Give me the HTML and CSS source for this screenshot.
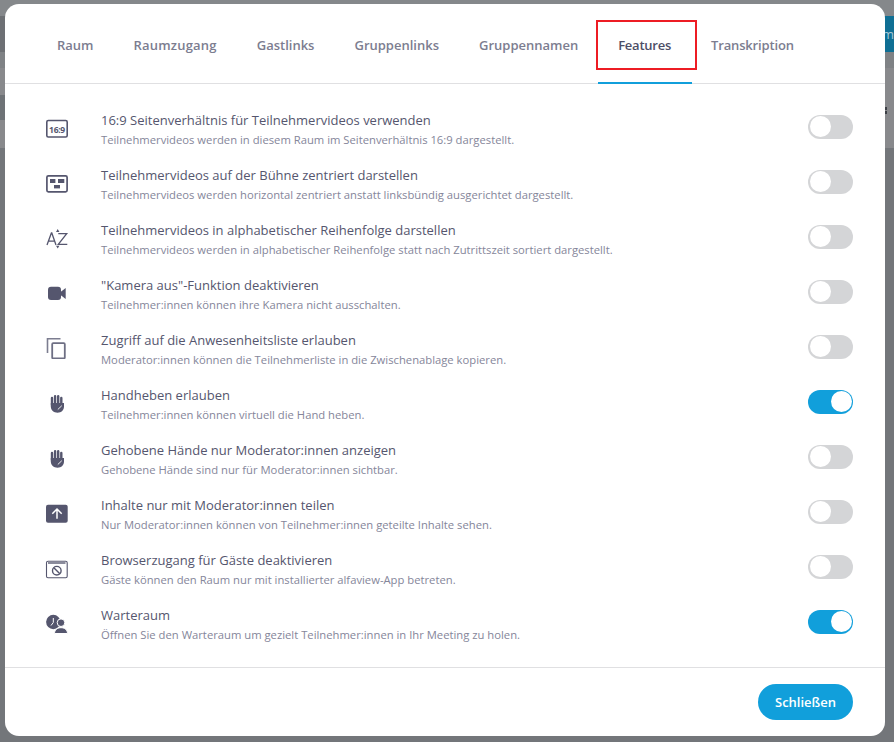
FILE: index.html
```html
<!DOCTYPE html>
<html lang="de">
<head>
    <meta charset="UTF-8">
    <meta name="viewport" content="width=device-width, initial-scale=1.0">
    <title>Raumeinstellungen</title>
    <link rel="stylesheet" href="styles.css">
</head>
<body>
    <div class="backdrop-button">m</div>
    <div class="backdrop-avatar"></div>
    <div class="backdrop-dots"></div>

    <div class="modal">
        <div class="tabs">
            <div class="tab">Raum</div>
            <div class="tab wider">Raumzugang</div>
            <div class="tab">Gastlinks</div>
            <div class="tab">Gruppenlinks</div>
            <div class="tab">Gruppennamen</div>
            <div class="tab active">Features</div>
            <div class="tab narrower">Transkription</div>
        </div>

        <div class="features">
            <div class="row">
                <div class="icon">
                    <svg width="24" height="24" viewBox="0 0 24 24"><rect x="1.800" y="5.500" width="20.400" height="16.500" rx="1.500" fill="none" stroke="#55566e" stroke-width="1.600"/><text x="12" y="17.500" text-anchor="middle" class="ratio">16:9</text></svg>
                </div>
                <div class="text">
                    <div class="title">16:9 Seitenverhältnis für Teilnehmervideos verwenden</div>
                    <div class="desc">Teilnehmervideos werden in diesem Raum im Seitenverhältnis 16:9 dargestellt.</div>
                </div>
                <div class="toggle"></div>
            </div>

            <div class="row">
                <div class="icon">
                    <svg width="24" height="24" viewBox="0 0 24 24"><rect x="1.900" y="5.800" width="20.200" height="16" rx="1.500" fill="none" stroke="#55566e" stroke-width="1.700"/><rect x="5" y="9" width="5.400" height="4" fill="#55566e"/><rect x="13" y="9" width="6.300" height="4" fill="#55566e"/><rect x="9" y="15" width="6" height="3.400" fill="#55566e"/></svg>
                </div>
                <div class="text">
                    <div class="title">Teilnehmervideos auf der Bühne zentriert darstellen</div>
                    <div class="desc">Teilnehmervideos werden horizontal zentriert anstatt linksbündig ausgerichtet dargestellt.</div>
                </div>
                <div class="toggle"></div>
            </div>

            <div class="row">
                <div class="icon">
                    <svg width="24" height="24" viewBox="0 0 24 24"><path d="M2 20L6.400 8h.4L11 20M3.500 16.200h6.200M13.300 8.700h8.400L13.300 19.300h9" fill="none" stroke="#55566e" stroke-width="1.300"/><path d="M11 7l1.700-3 1.700 3zM11 20.800l1.700 2.600 1.700-2.600z" fill="#55566e"/></svg>
                </div>
                <div class="text">
                    <div class="title">Teilnehmervideos in alphabetischer Reihenfolge darstellen</div>
                    <div class="desc">Teilnehmervideos werden in alphabetischer Reihenfolge statt nach Zutrittszeit sortiert dargestellt.</div>
                </div>
                <div class="toggle"></div>
            </div>

            <div class="row">
                <div class="icon">
                    <svg width="24" height="24" viewBox="0 0 24 24"><rect x="3" y="6.700" width="13" height="13.300" rx="3" fill="#55566e"/><path d="M15.500 12l5.200-4v11l-5.200-4z" fill="#55566e"/></svg>
                </div>
                <div class="text">
                    <div class="title">"Kamera aus"-Funktion deaktivieren</div>
                    <div class="desc">Teilnehmer:innen können ihre Kamera nicht ausschalten.</div>
                </div>
                <div class="toggle"></div>
            </div>

            <div class="row">
                <div class="icon">
                    <svg width="24" height="24" viewBox="0 0 24 24"><path d="M2.500 18V3.800h13" fill="none" stroke="#7c7d90" stroke-width="1.600"/><rect x="7.200" y="8.200" width="12.600" height="15.200" rx="1" fill="none" stroke="#6e6f84" stroke-width="1.800"/></svg>
                </div>
                <div class="text">
                    <div class="title">Zugriff auf die Anwesenheitsliste erlauben</div>
                    <div class="desc">Moderator:innen können die Teilnehmerliste in die Zwischenablage kopieren.</div>
                </div>
                <div class="toggle"></div>
            </div>

            <div class="row">
                <div class="icon">
                    <svg width="24" height="24" viewBox="0 0 24 24"><path d="M7 8v7M10.100 6.300V14M13.200 6.300V14M16.300 8v6" stroke="#55566e" stroke-width="2.400" stroke-linecap="round" fill="none"/><path d="M5.800 13h13.200v3.500c0 3.500-2.700 6.200-6.500 6.200s-6.700-2.700-6.700-6.200z" fill="#55566e"/><path d="M12.800 19.500l4-3.800" stroke="#fff" stroke-width="0.900" fill="none"/></svg>
                </div>
                <div class="text">
                    <div class="title">Handheben erlauben</div>
                    <div class="desc">Teilnehmer:innen können virtuell die Hand heben.</div>
                </div>
                <div class="toggle on"></div>
            </div>

            <div class="row">
                <div class="icon">
                    <svg width="24" height="24" viewBox="0 0 24 24"><path d="M7 8v7M10.100 6.300V14M13.200 6.300V14M16.300 8v6" stroke="#55566e" stroke-width="2.400" stroke-linecap="round" fill="none"/><path d="M5.800 13h13.200v3.500c0 3.500-2.700 6.200-6.500 6.200s-6.700-2.700-6.700-6.200z" fill="#55566e"/><path d="M12.800 19.500l4-3.800" stroke="#fff" stroke-width="0.900" fill="none"/></svg>
                </div>
                <div class="text">
                    <div class="title">Gehobene Hände nur Moderator:innen anzeigen</div>
                    <div class="desc">Gehobene Hände sind nur für Moderator:innen sichtbar.</div>
                </div>
                <div class="toggle"></div>
            </div>

            <div class="row">
                <div class="icon">
                    <svg width="24" height="24" viewBox="0 0 24 24"><rect x="1" y="4.700" width="21.700" height="18" rx="2" fill="#55566e"/><path d="M12 18.700V9.500M7.300 13.700L12 9l4.700 4.700" fill="none" stroke="#fff" stroke-width="1.500"/></svg>
                </div>
                <div class="text">
                    <div class="title">Inhalte nur mit Moderator:innen teilen</div>
                    <div class="desc">Nur Moderator:innen können von Teilnehmer:innen geteilte Inhalte sehen.</div>
                </div>
                <div class="toggle"></div>
            </div>

            <div class="row">
                <div class="icon">
                    <svg width="24" height="24" viewBox="0 0 24 24"><rect x="1.500" y="6.200" width="20.700" height="16.600" rx="1.500" fill="none" stroke="#55566e" stroke-width="1.100"/><rect x="3" y="6.500" width="17.500" height="2.500" fill="#8b8c9c"/><circle cx="11.800" cy="15.700" r="4.300" fill="none" stroke="#55566e" stroke-width="1.400"/><path d="M8.800 12.700l6 6" stroke="#55566e" stroke-width="1.400"/></svg>
                </div>
                <div class="text">
                    <div class="title">Browserzugang für Gäste deaktivieren</div>
                    <div class="desc">Gäste können den Raum nur mit installierter alfaview-App betreten.</div>
                </div>
                <div class="toggle"></div>
            </div>

            <div class="row">
                <div class="icon">
                    <svg width="24" height="24" viewBox="0 0 24 24"><circle cx="8.300" cy="12" r="7.200" fill="#55566e"/><path d="M8.300 8v4.500l-2.300 3" fill="none" stroke="#fff" stroke-width="1"/><circle cx="16" cy="12.700" r="3.800" fill="#55566e" stroke="#fff" stroke-width="1"/><path d="M9.500 23.500c0-3.700 2.800-5.800 6.500-5.800s6.500 2.100 6.500 5.800z" fill="#55566e" stroke="#fff" stroke-width="1"/></svg>
                </div>
                <div class="text">
                    <div class="title">Warteraum</div>
                    <div class="desc">Öffnen Sie den Warteraum um gezielt Teilnehmer:innen in Ihr Meeting zu holen.</div>
                </div>
                <div class="toggle on"></div>
            </div>
        </div>

        <div class="footer">
            <button class="close">Schließen</button>
        </div>
    </div>
</body>
</html>
```

FILE: styles.css
```css
html, body {
    height: 100%;
}
body {
    margin: 0;
    position: relative;
    overflow: hidden;
    background: linear-gradient(#85888b 0 16px, #6d7074 16px 52px, #7f8285 52px 68px, #88898c 68px 148px, #73767a 148px);
    font-family: 'Open Sans', sans-serif;
    color: #55566e;
}
.backdrop-button {
    position: absolute;
    top: 16px;
    right: 0;
    width: 40px;
    height: 36px;
    background: #0f6f94;
    color: #a9c7d4;
    font-size: 13px;
    line-height: 36px;
    text-align: right;
}
.backdrop-avatar {
    position: absolute;
    top: 95px;
    left: 0;
    width: 5px;
    height: 25px;
    background: #6e7276;
}
.backdrop-dots {
    position: absolute;
    top: 107px;
    left: 885px;
    width: 2px;
    height: 7px;
    background: linear-gradient(#3d4046 0 3px, transparent 3px 4px, #3d4046 4px);
}
.modal {
    position: absolute;
    top: 4px;
    left: 5px;
    width: 880px;
    height: 732px;
    display: flex;
    flex-direction: column;
    background: #fff;
    border-radius: 14px;
}
.tabs {
    display: flex;
    height: 80px;
    padding-left: 32px;
    border-bottom: 1px solid #e0e0e2;
    box-sizing: border-box;
}
.tab {
    position: relative;
    padding: 0 20px;
    line-height: 82px;
    font-size: 13px;
    font-weight: 600;
    color: #7c7d90;
}
.tab.wider {
    letter-spacing: 0.2px;
}
.tab.narrower {
    letter-spacing: -0.15px;
}
.tab.active {
    color: #4d4e66;
    letter-spacing: -0.25px;
    border-bottom: 2px solid #119fdb;
    height: 78px;
    padding-right: 21px;
    margin: 0 -1px -1px 0;
}
/* red marker from the screenshot */
.tab.active::after {
    content: "";
    position: absolute;
    top: 16px;
    left: -2px;
    right: -5px;
    height: 46px;
    border: 2px solid #ed1c24;
}
.features {
    flex: 1;
    padding: 15px 32px 0 40px;
}
.row {
    display: flex;
    align-items: center;
    height: 55px;
}
.icon {
    width: 24px;
    height: 24px;
    margin-right: 32px;
}
.icon svg {
    display: block;
}
.ratio {
    font-family: 'Open Sans', sans-serif;
    font-size: 8.500px;
    font-weight: 700;
    letter-spacing: -0.3px;
    fill: #55566e;
}
.text {
    flex: 1;
    padding-top: 4px;
}
.title {
    font-size: 13px;
    line-height: 20px;
    color: #55566e;
}
.desc {
    margin-top: 2px;
    font-size: 11.25px;
    line-height: 16px;
    color: #85869a;
}
.toggle {
    position: relative;
    width: 45px;
    height: 24px;
    border-radius: 12px;
    background: #d4d5d7;
}
.toggle::after {
    content: "";
    position: absolute;
    top: 1.500px;
    left: 1.500px;
    width: 21px;
    height: 21px;
    border-radius: 50%;
    background: #fff;
}
.toggle.on {
    background: #119fdb;
}
.toggle.on::after {
    left: 22.500px;
}
.footer {
    display: flex;
    justify-content: flex-end;
    height: 69px;
    padding: 16px 32px 0 0;
    border-top: 1px solid #e0e0e2;
    box-sizing: border-box;
}
.close {
    width: 95px;
    height: 36px;
    border: none;
    border-radius: 18px;
    background: #119fdb;
    color: #fff;
    font-family: 'Open Sans', sans-serif;
    font-size: 13px;
    font-weight: 600;
}
```
